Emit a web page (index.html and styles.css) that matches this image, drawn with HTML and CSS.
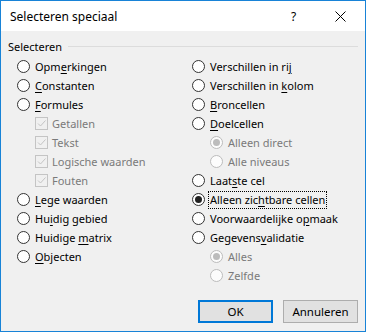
FILE: index.html
```html
<!DOCTYPE html>
<html>
<head>
  <title>Selecteren speciaal</title>
  <meta charset="utf-8">
  <link rel="stylesheet" href="styles.css">
</head>
<body>
  <div class="dialog">
    <div class="titlebar">
      <div class="title">Selecteren speciaal</div>
      <div class="help">?</div>
      <div class="close">
        <svg width="11" height="11" viewBox="0 0 11 11"><path d="M0.5 0.5 L10.5 10.5 M10.5 0.5 L0.5 10.5" stroke="#000" stroke-width="1" fill="none"/></svg>
      </div>
    </div>

    <div class="group-head">
      <span class="group-label">Selecteren</span>
      <span class="group-line"></span>
    </div>

    <div class="columns">
      <div class="column">
        <div class="row"><span class="radio"></span><span class="label">Opm<u>e</u>rkingen</span></div>
        <div class="row"><span class="radio"></span><span class="label"><u>C</u>onstanten</span></div>
        <div class="row"><span class="radio"></span><span class="label"><u>F</u>ormules</span></div>
        <div class="row sub disabled"><span class="check"><svg width="13" height="13" viewBox="0 0 13 13"><path d="M3 6.5 L5.5 9 L10.5 3.5" stroke="#c4c4c4" stroke-width="1" fill="none"/></svg></span><span class="label">Getallen</span></div>
        <div class="row sub disabled"><span class="check"><svg width="13" height="13" viewBox="0 0 13 13"><path d="M3 6.5 L5.5 9 L10.5 3.5" stroke="#c4c4c4" stroke-width="1" fill="none"/></svg></span><span class="label">Tekst</span></div>
        <div class="row sub disabled"><span class="check"><svg width="13" height="13" viewBox="0 0 13 13"><path d="M3 6.5 L5.5 9 L10.5 3.5" stroke="#c4c4c4" stroke-width="1" fill="none"/></svg></span><span class="label">Logische waarden</span></div>
        <div class="row sub disabled"><span class="check"><svg width="13" height="13" viewBox="0 0 13 13"><path d="M3 6.5 L5.5 9 L10.5 3.5" stroke="#c4c4c4" stroke-width="1" fill="none"/></svg></span><span class="label">Fouten</span></div>
        <div class="row"><span class="radio"></span><span class="label"><u>L</u>ege waarden</span></div>
        <div class="row"><span class="radio"></span><span class="label">Hu<u>i</u>dig gebied</span></div>
        <div class="row"><span class="radio"></span><span class="label">Huidige <u>m</u>atrix</span></div>
        <div class="row"><span class="radio"></span><span class="label"><u>O</u>bjecten</span></div>
      </div>

      <div class="column">
        <div class="row"><span class="radio"></span><span class="label">Verschillen in ri<u>j</u></span></div>
        <div class="row"><span class="radio"></span><span class="label">Verschillen in <u>k</u>olom</span></div>
        <div class="row"><span class="radio"></span><span class="label"><u>B</u>roncellen</span></div>
        <div class="row"><span class="radio"></span><span class="label"><u>D</u>oelcellen</span></div>
        <div class="row sub disabled"><span class="radio checked"></span><span class="label">Alleen direct</span></div>
        <div class="row sub disabled"><span class="radio"></span><span class="label">Alle niveaus</span></div>
        <div class="row"><span class="radio"></span><span class="label">Laat<u>s</u>te cel</span></div>
        <div class="row"><span class="radio checked"></span><span class="label focused">Alleen zic<u>h</u>tbare cellen</span></div>
        <div class="row"><span class="radio"></span><span class="label">Voorwaardelijke o<u>p</u>maak</span></div>
        <div class="row"><span class="radio"></span><span class="label">Gegevens<u>v</u>alidatie</span></div>
        <div class="row sub disabled"><span class="radio checked"></span><span class="label">Alles</span></div>
        <div class="row sub disabled"><span class="radio"></span><span class="label">Zelfde</span></div>
      </div>
    </div>

    <div class="buttons">
      <button class="button default">OK</button>
      <button class="button">Annuleren</button>
    </div>
  </div>
</body>
</html>
```

FILE: styles.css
```css
* {
  box-sizing: border-box;
}

body {
  margin: 0;
  padding: 0;
  font-family: "Noto Sans", "Open Sans", sans-serif;
  font-size: 11px;
  color: #000;
}

.dialog {
  width: 366px;
  height: 332px;
  border: 1px solid #1883d7;
  background-color: #f0f0f0;
  display: flex;
  flex-direction: column;
}

.titlebar {
  height: 30px;
  background-color: #fff;
  display: flex;
  align-items: center;
  padding-left: 9px;
}

.title {
  flex: 1;
  font-size: 12px;
}

.help {
  width: 12px;
  font-size: 12px;
  margin-right: 32px;
}

.close {
  width: 11px;
  height: 11px;
  margin-right: 19px;
  display: flex;
}

.group-head {
  display: flex;
  align-items: center;
  height: 16px;
  margin: 7px 7px 0 7px;
}

.group-label {
  margin-right: 6px;
}

.group-line {
  flex: 1;
  height: 1px;
  background-color: #dcdcdc;
}

.columns {
  display: grid;
  grid-template-columns: 175px 1fr;
  margin: 3px 0 0 16px;
}

.row {
  height: 19px;
  display: flex;
  align-items: center;
}

.row.sub {
  padding-left: 18px;
}

.radio {
  width: 13px;
  height: 13px;
  border: 1px solid #333;
  border-radius: 50%;
  background-color: #fff;
  margin-right: 5px;
  position: relative;
  flex-shrink: 0;
}

.radio.checked::after {
  content: '';
  position: absolute;
  left: 2px;
  top: 2px;
  width: 7px;
  height: 7px;
  border-radius: 50%;
  background-color: #222;
}

.disabled .radio {
  border-color: #bcbcbc;
  background-color: #fcfcfc;
}

.disabled .radio.checked::after {
  background-color: #bcbcbc;
}

.check {
  width: 13px;
  height: 13px;
  border: 1px solid #c4c4c4;
  background-color: #f0f0f0;
  margin-right: 4px;
  display: flex;
  flex-shrink: 0;
}

.check svg {
  margin: -1px;
}

.disabled .label {
  color: #7a7a7a;
}

.label u {
  text-underline-offset: 2px;
}

.label.focused {
  border: 1px dotted #000;
  padding: 0 1px;
  margin-left: -2px;
  line-height: 16px;
}

.buttons {
  margin-top: auto;
  margin-bottom: 8px;
  display: flex;
  justify-content: flex-end;
  gap: 10px;
  padding-right: 7px;
}

.button {
  width: 75px;
  height: 23px;
  background-color: #e1e1e1;
  border: 1px solid #adadad;
  font-family: "Noto Sans", "Open Sans", sans-serif;
  font-size: 11.5px;
  color: #000;
  padding: 0;
}

.button.default {
  border: 2px solid #0078d7;
}
```
